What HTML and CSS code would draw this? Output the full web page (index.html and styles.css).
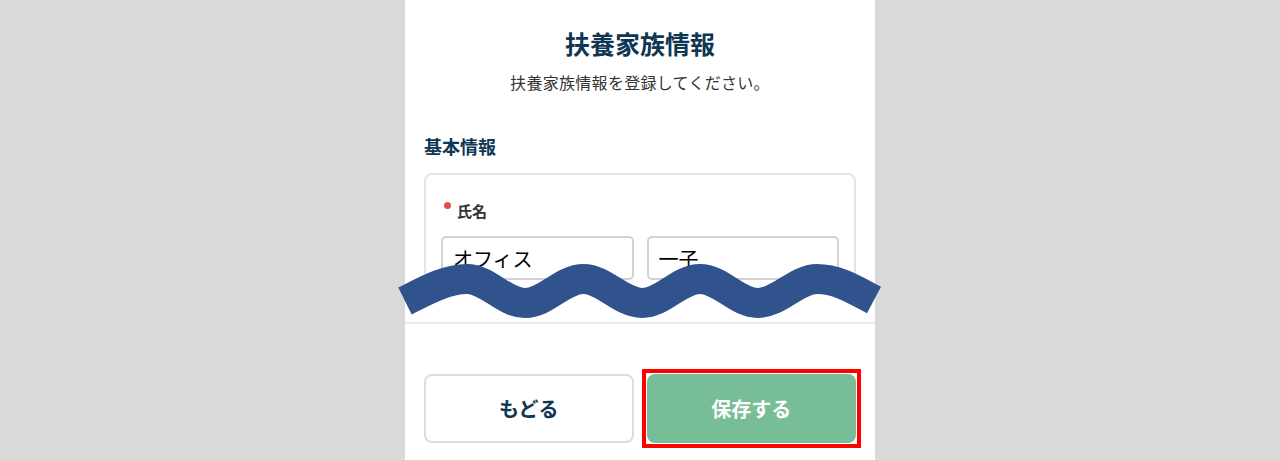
FILE: index.html
```html
<!DOCTYPE html>
<html lang="ja">
<head>
  <meta charset="utf-8">
  <title>扶養家族情報</title>
  <link rel="stylesheet" href="styles.css">
</head>
<body>
  <div class="screen">
    <div class="panel">
      <div class="panel-body">
        <h1 class="title">扶養家族情報</h1>
        <p class="lead">扶養家族情報を登録してください。</p>

        <h2 class="section-title">基本情報</h2>
        <div class="card">
          <div class="field-label"><span class="required-dot"></span>氏名</div>
          <div class="name-row">
            <input class="text-input" type="text" value="オフィス">
            <input class="text-input" type="text" value="一子">
          </div>
        </div>
      </div>

      <div class="panel-footer">
        <button class="btn btn-back">もどる</button>
        <div class="highlight">
          <button class="btn btn-save">保存する</button>
        </div>
      </div>

      <!-- cut mark: content between the fields and the footer is omitted -->
      <svg class="cut-wave" viewBox="395 255 490 80" width="490" height="80">
        <path d="M405,301 C425,291 446,279 467,279
                 C488,279 504,303 525,303
                 C546,303 562,279 583.5,279
                 C604.5,279 621,303 642,303
                 C663,303 679,279 700,279
                 C721,279 737,303 758,303
                 C779,303 796,279 817,279
                 C838,279 855,290 874,300"
              fill="none" stroke="#30538d" stroke-width="30" stroke-linecap="butt"/>
      </svg>
    </div>
  </div>
</body>
</html>
```

FILE: styles.css
```css
html, body { margin: 0; height: 100%; }

body {
  background: #d9d9d9;
  font-family: "Noto Sans CJK JP", "Noto Sans", sans-serif;
  color: #333;
  overflow: hidden;
}

.screen {
  display: flex;
  justify-content: center;
  height: 100%;
}

.panel {
  position: relative;
  width: 470px;
  background: #fff;
  display: flex;
  flex-direction: column;
}

.panel-body {
  height: 290px;
  overflow: hidden;
  padding: 26px 19px 0;
  box-sizing: border-box;
}

.title {
  margin: 0;
  font-size: 25px;
  line-height: 34px;
  font-weight: 700;
  text-align: center;
  color: #0f3652;
}

.lead {
  margin: 10px 0 0;
  font-size: 16px;
  line-height: 24px;
  letter-spacing: 0.3px;
  text-align: center;
  color: #333;
}

.section-title {
  margin: 39px 0 14px;
  font-size: 18px;
  line-height: 26px;
  font-weight: 700;
  color: #0f3652;
}

.card {
  border: 2px solid #e4e4e4;
  border-radius: 8px;
  padding: 26px 15px 24px;
}

.field-label {
  display: flex;
  align-items: flex-start;
  gap: 6px;
  font-size: 15px;
  line-height: 20px;
  font-weight: 700;
  color: #333;
  margin-bottom: 15px;
}

.required-dot {
  width: 7px;
  height: 7px;
  border-radius: 50%;
  background: #e84d4d;
  margin: 1px 0 0 3px;
}

.name-row {
  display: grid;
  grid-template-columns: 1fr 1fr;
  gap: 13px;
}

.text-input {
  box-sizing: border-box;
  width: 100%;
  height: 44px;
  border: 2px solid #d2d2d2;
  border-radius: 5px;
  padding: 0 10px;
  font-family: inherit;
  font-size: 20px;
  color: #000;
  background: #fff;
}

.panel-footer {
  margin-top: 32px;
  border-top: 2px solid #ebebeb;
  padding: 50px 19px 0;
  display: grid;
  grid-template-columns: 1fr 1fr;
  gap: 13px;
}

.btn {
  width: 100%;
  height: 69px;
  border-radius: 8px;
  font-family: inherit;
  font-size: 20px;
  font-weight: 700;
  cursor: pointer;
}

.btn-back {
  background: #fff;
  border: 2px solid #dcdcdc;
  color: #0f3652;
}

.highlight {
  margin: -5px;
  padding: 1px;
  border: 4px solid #ff0000;
}

.btn-save {
  display: block;
  background: #77bd98;
  border: none;
  color: #fff;
}

.cut-wave {
  position: absolute;
  left: -10px;
  top: 255px;
  overflow: visible;
  pointer-events: none;
}
```
